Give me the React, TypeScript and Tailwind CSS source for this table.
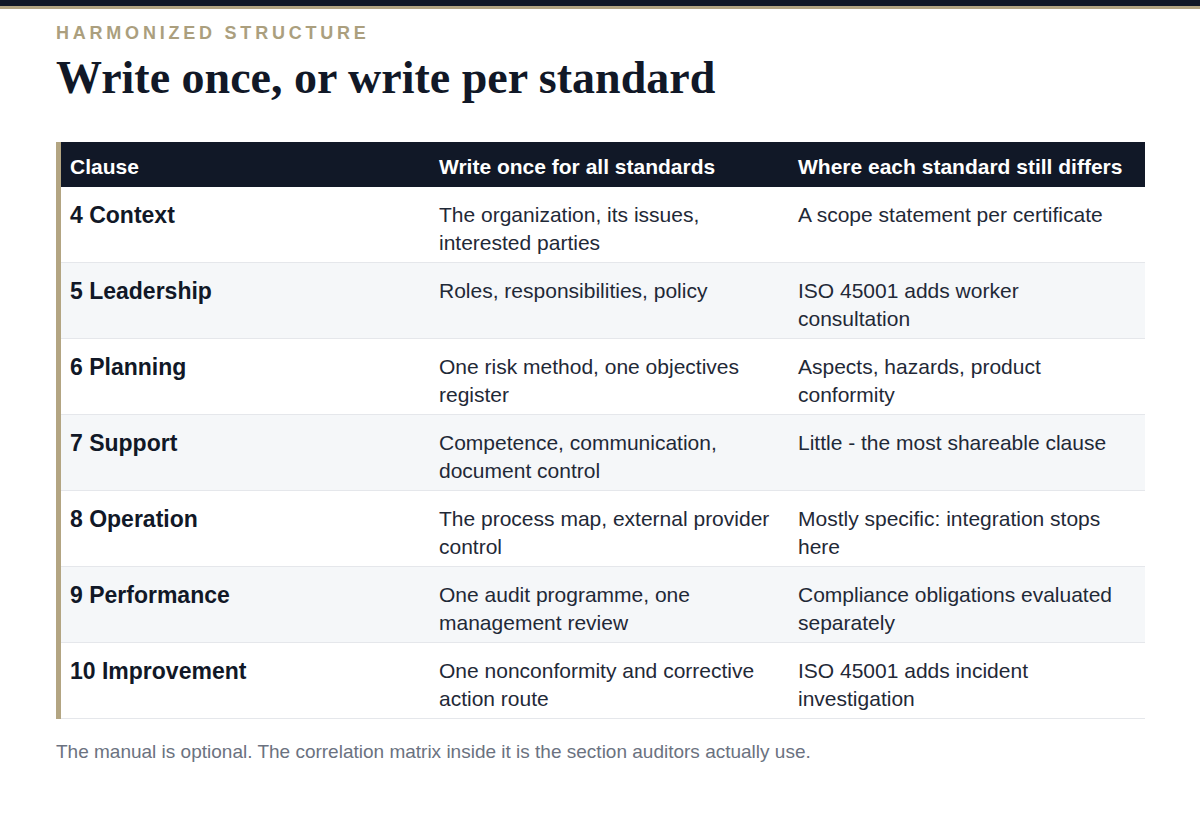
import React from "react";

const rows = [
  ["4 Context", "The organization, its issues, interested parties", "A scope statement per certificate"],
  ["5 Leadership", "Roles, responsibilities, policy", "ISO 45001 adds worker consultation"],
  ["6 Planning", "One risk method, one objectives register", "Aspects, hazards, product conformity"],
  ["7 Support", "Competence, communication, document control", "Little - the most shareable clause"],
  ["8 Operation", "The process map, external provider control", "Mostly specific: integration stops here"],
  ["9 Performance", "One audit programme, one management review", "Compliance obligations evaluated separately"],
  ["10 Improvement", "One nonconformity and corrective action route", "ISO 45001 adds incident investigation"],
];

const App: React.FC = () => {
  return (
    <div className="w-[1200px] h-[822px] bg-white font-['Liberation_Sans',Arial,sans-serif]">
      <div className="h-[6px] bg-[#111827]"></div>
      <div className="h-[3px] bg-[#b3a582]"></div>
      <div className="px-[56px] pt-[12px]">
        <div className="text-[18px] font-bold tracking-[0.21em] text-[#ab9f7e] leading-[24px]">
          HARMONIZED STRUCTURE
        </div>
        <h1 className="mt-[6px] font-['Liberation_Serif',serif] font-bold text-[46px] leading-[54px] text-[#111827]">
          Write once, or write per standard
        </h1>
        <div className="mt-[37px] border-l-[5px] border-[#b3a582] w-[1089px]">
          <div className="grid grid-cols-[368px_359px_357px] bg-[#111827] text-white font-bold text-[21px] leading-[25px]">
            <div className="px-[9px] pt-[12px] pb-[8px]">Clause</div>
            <div className="px-[10px] pt-[12px] pb-[8px]">Write once for all standards</div>
            <div className="px-[10px] pt-[12px] pb-[8px]">Where each standard still differs</div>
          </div>
          {rows.map((r, i) => (
            <div
              key={r[0]}
              className={
                "grid grid-cols-[368px_359px_357px] h-[76px] border-b border-[#e5e7eb] " +
                (i % 2 === 1 ? "bg-[#f5f7f9]" : "bg-white")
              }
            >
              <div className="px-[9px] pt-[14px] text-[23px] font-bold text-[#111827] leading-[28px]">{r[0]}</div>
              <div className="px-[10px] pt-[14px] text-[21px] text-[#1f2937] leading-[28px]">{r[1]}</div>
              <div className="px-[10px] pt-[14px] text-[21px] text-[#1f2937] leading-[28px]">{r[2]}</div>
            </div>
          ))}
        </div>
        <p className="mt-[21px] text-[19px] leading-[24px] text-[#6b7280]">
          The manual is optional. The correlation matrix inside it is the section auditors actually use.
        </p>
      </div>
    </div>
  );
};

export default App;
